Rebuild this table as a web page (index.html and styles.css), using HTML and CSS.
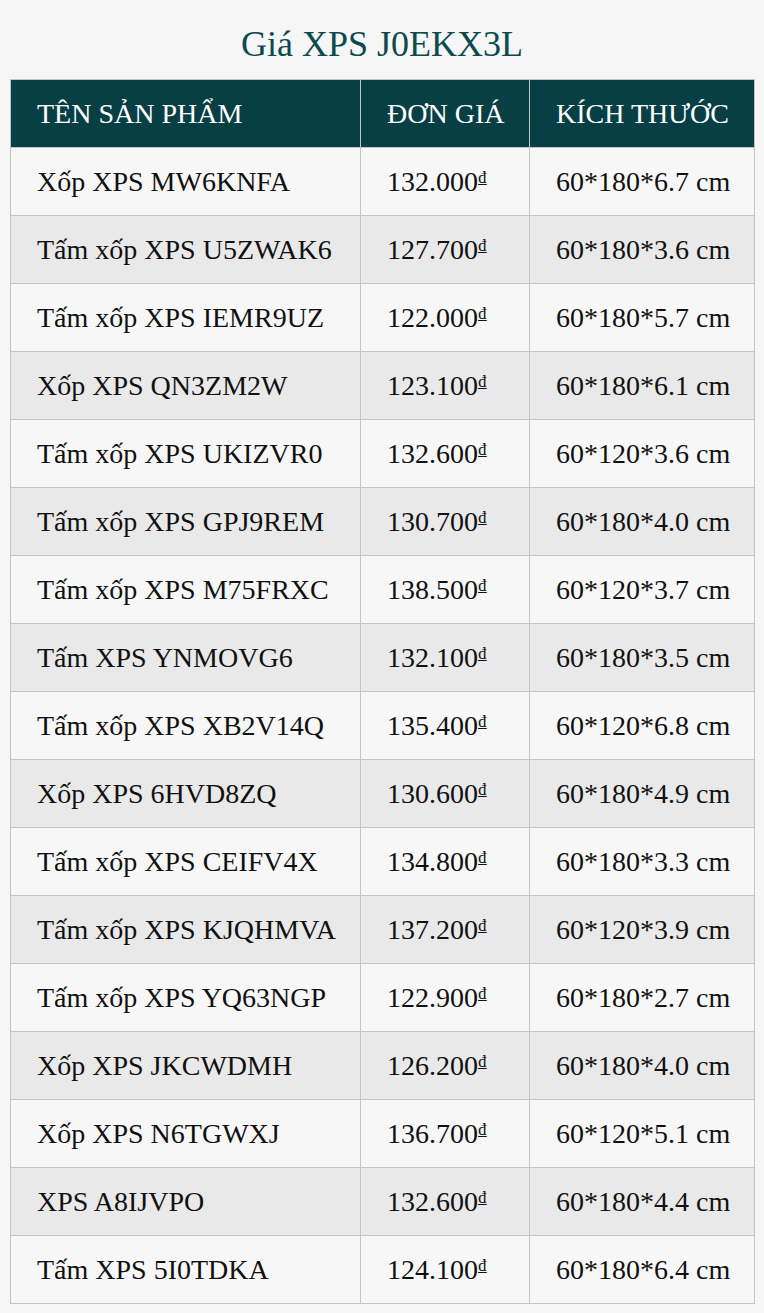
FILE: index.html
```html
<!DOCTYPE html>
<html lang="vi">
<head>
<meta charset="utf-8">
<title>Giá XPS J0EKX3L</title>
<link rel="stylesheet" href="styles.css">
</head>
<body>
<div class="page">
  <h1 class="title">Giá XPS J0EKX3L</h1>
  <table class="price-table">
    <colgroup>
      <col class="c-name">
      <col class="c-price">
      <col class="c-size">
    </colgroup>
    <thead>
      <tr><th>TÊN SẢN PHẨM</th><th>ĐƠN GIÁ</th><th>KÍCH THƯỚC</th></tr>
    </thead>
    <tbody>
      <tr><td>Xốp XPS MW6KNFA</td><td>132.000<span class="cur">₫</span></td><td>60*180*6.7 cm</td></tr>
      <tr><td>Tấm xốp XPS U5ZWAK6</td><td>127.700<span class="cur">₫</span></td><td>60*180*3.6 cm</td></tr>
      <tr><td>Tấm xốp XPS IEMR9UZ</td><td>122.000<span class="cur">₫</span></td><td>60*180*5.7 cm</td></tr>
      <tr><td>Xốp XPS QN3ZM2W</td><td>123.100<span class="cur">₫</span></td><td>60*180*6.1 cm</td></tr>
      <tr><td>Tấm xốp XPS UKIZVR0</td><td>132.600<span class="cur">₫</span></td><td>60*120*3.6 cm</td></tr>
      <tr><td>Tấm xốp XPS GPJ9REM</td><td>130.700<span class="cur">₫</span></td><td>60*180*4.0 cm</td></tr>
      <tr><td>Tấm xốp XPS M75FRXC</td><td>138.500<span class="cur">₫</span></td><td>60*120*3.7 cm</td></tr>
      <tr><td>Tấm XPS YNMOVG6</td><td>132.100<span class="cur">₫</span></td><td>60*180*3.5 cm</td></tr>
      <tr><td>Tấm xốp XPS XB2V14Q</td><td>135.400<span class="cur">₫</span></td><td>60*120*6.8 cm</td></tr>
      <tr><td>Xốp XPS 6HVD8ZQ</td><td>130.600<span class="cur">₫</span></td><td>60*180*4.9 cm</td></tr>
      <tr><td>Tấm xốp XPS CEIFV4X</td><td>134.800<span class="cur">₫</span></td><td>60*180*3.3 cm</td></tr>
      <tr><td>Tấm xốp XPS KJQHMVA</td><td>137.200<span class="cur">₫</span></td><td>60*120*3.9 cm</td></tr>
      <tr><td>Tấm xốp XPS YQ63NGP</td><td>122.900<span class="cur">₫</span></td><td>60*180*2.7 cm</td></tr>
      <tr><td>Xốp XPS JKCWDMH</td><td>126.200<span class="cur">₫</span></td><td>60*180*4.0 cm</td></tr>
      <tr><td>Xốp XPS N6TGWXJ</td><td>136.700<span class="cur">₫</span></td><td>60*120*5.1 cm</td></tr>
      <tr><td>XPS A8IJVPO</td><td>132.600<span class="cur">₫</span></td><td>60*180*4.4 cm</td></tr>
      <tr><td>Tấm XPS 5I0TDKA</td><td>124.100<span class="cur">₫</span></td><td>60*180*6.4 cm</td></tr>
    </tbody>
  </table>
</div>
</body>
</html>
```
FILE: styles.css
```css
html, body {
  margin: 0;
  padding: 0;
  background: #f6f6f6;
}
body {
  font-family: "Liberation Serif", "Times New Roman", serif;
  color: #111;
}
.page {
  padding: 0 10px 10px;
}
.title {
  margin: 0;
  padding-top: 23px;
  height: 79px;
  box-sizing: border-box;
  text-align: center;
  font-weight: normal;
  font-size: 36px;
  line-height: 42px;
  color: #0c4a4f;
}
.price-table {
  width: 744px;
  border-collapse: collapse;
  table-layout: fixed;
  font-size: 28px;
}
.c-name { width: 350px; }
.c-price { width: 169px; }
.c-size { width: 225px; }
.price-table th,
.price-table td {
  border: 1px solid #c4c4c4;
  height: 68px;
  padding: 0 0 0 26px;
  text-align: left;
  vertical-align: middle;
  box-sizing: border-box;
  white-space: nowrap;
}
.price-table th {
  background: #073f45;
  color: #fff;
  font-weight: normal;
}
.price-table tbody tr:nth-child(odd) td { background: #f7f7f7; }
.price-table tbody tr:nth-child(even) td { background: #e9e9e9; }
.cur {
  font-size: 0.6em;
  vertical-align: 0.45em;
}
```
